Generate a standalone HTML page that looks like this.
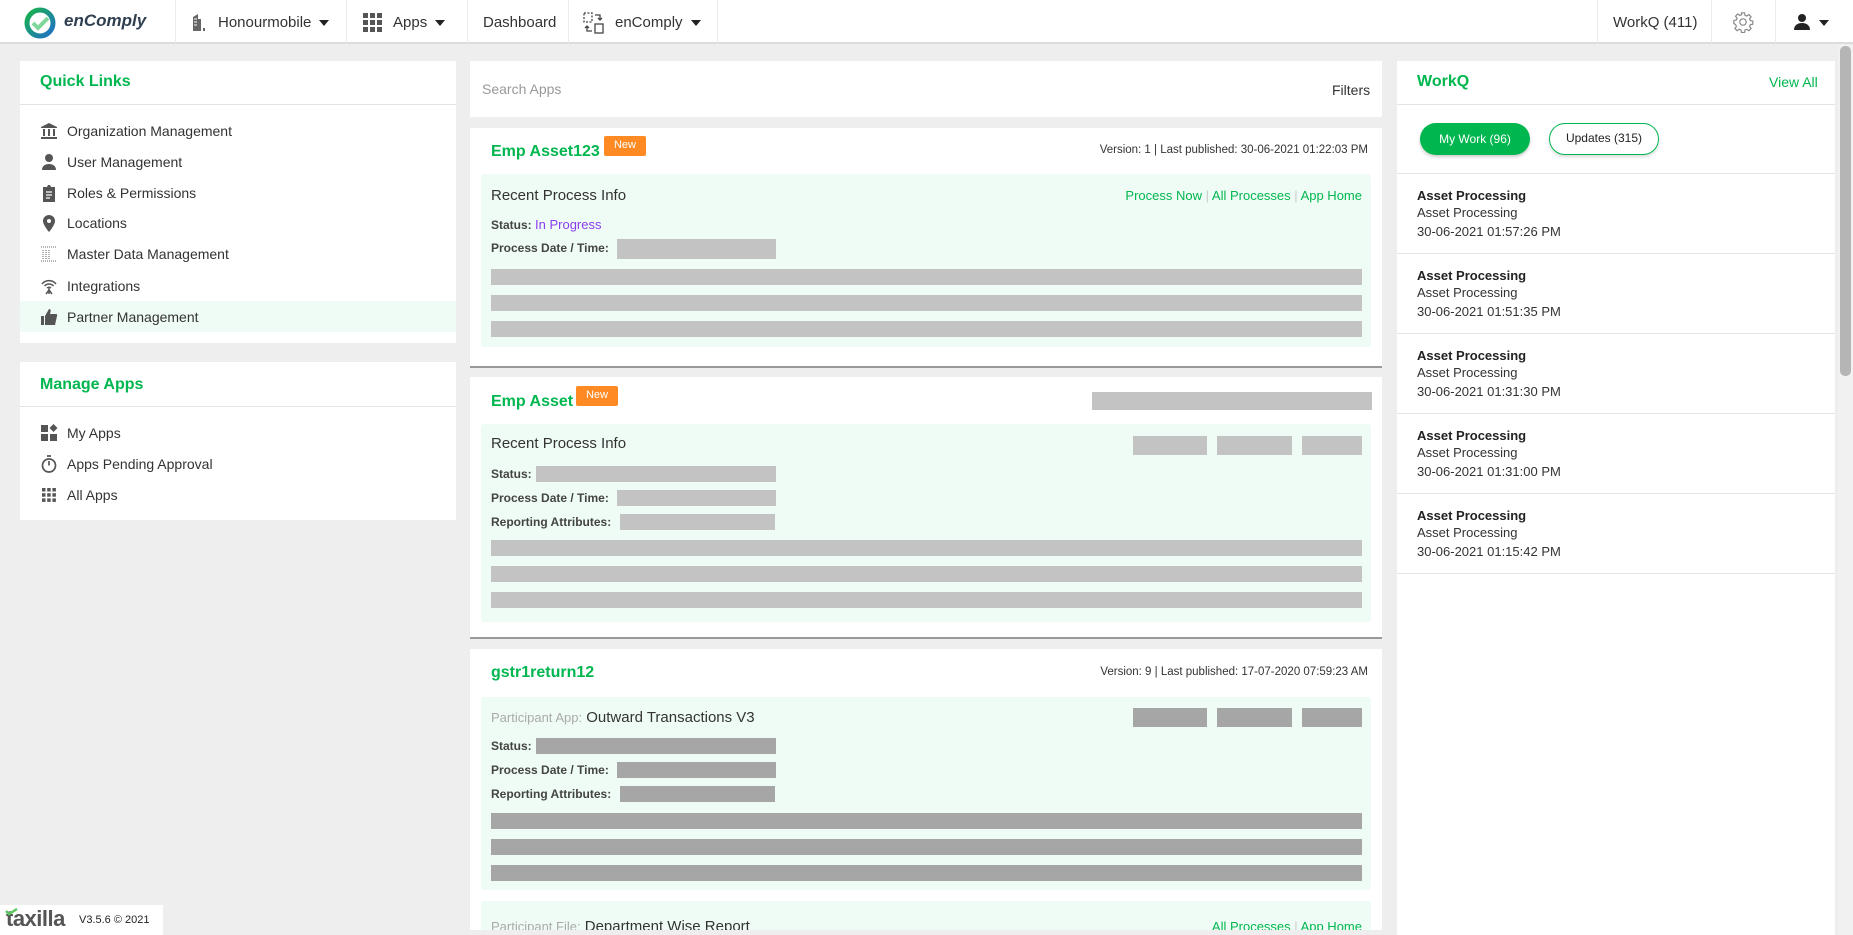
<!DOCTYPE html>
<html><head><meta charset="utf-8">
<style>
*{box-sizing:border-box;margin:0;padding:0}
body{width:1853px;height:935px;overflow:hidden;background:#eeeeee;font-family:"Liberation Sans",sans-serif;color:#333;position:relative}
.a{position:absolute}
.nav{left:0;top:0;width:1853px;height:44px;background:#fff;border-bottom:2px solid #dcdcdc}
.sep{top:0;width:1px;height:43px;background:#ececec}
.nt{font-size:15px;color:#333;top:14px;white-space:nowrap}
.caret{display:inline-block;width:0;height:0;border-left:5px solid transparent;border-right:5px solid transparent;border-top:6px solid #222;vertical-align:middle;margin-left:8px}
.panel{background:#fff}
.hdr{font-size:16px;font-weight:bold;color:#00b74f}
.hr{height:1px;background:#e4e4e4}
.it{font-size:14px;color:#333;white-space:nowrap}
.ic{width:18px;height:18px}
.gbox{background:#effcf5;border-radius:3px}
.g{background:#c3c3c3}
.gd{background:#a6a6a6}
.lbl{font-size:12px;color:#444;font-weight:bold;white-space:nowrap}
.card{background:#fff;border-bottom:2px solid #999}
.ttl{font-size:16px;font-weight:bold;color:#00b74f}
.new{background:#ff8a24;color:#fff;font-size:11px;text-align:center;line-height:19px;border-radius:2px}
.sm{font-size:11.5px;color:#333;white-space:nowrap}
.lk{font-size:13px;color:#00b74f;white-space:nowrap}
.wi b{font-size:13px;color:#222;display:block}
.wi span{font-size:13px;color:#333;display:block;line-height:19px}
</style></head><body>

<div class="a nav"></div>
<svg class="a" style="left:24px;top:7px" width="32" height="32" viewBox="0 0 32 32">
<defs><linearGradient id="lg" x1="0" y1="0" x2="1" y2="1"><stop offset="0" stop-color="#19b34a"/><stop offset="1" stop-color="#1f6fc9"/></linearGradient></defs>
<circle cx="16" cy="16" r="13" fill="none" stroke="url(#lg)" stroke-width="5"/>
<path d="M9 16l5 5 10-10" fill="none" stroke="#7fd79b" stroke-width="4"/></svg>
<div class="a" style="left:64px;top:11px;font-size:17px;font-weight:bold;font-style:italic;color:#2f3f50">enComply</div>
<div class="a sep" style="left:175px"></div>
<svg class="a" style="left:187px;top:12px" width="20" height="20" viewBox="0 0 20 20"><path d="M6 19V5l5-3v17zM11 19V7h3v12zM3 19h15v-3h-2v3" fill="#666"/><path d="M7 7h3M7 10h3M7 13h3" stroke="#fff" stroke-width="1"/></svg>
<div class="a nt" style="left:218px">Honourmobile<span class="caret"></span></div>
<div class="a sep" style="left:346px"></div>
<svg class="a" style="left:363px;top:13px" width="20" height="19" viewBox="0 0 20 19"><g fill="#555"><rect x="0" y="0" width="5" height="5"/><rect x="7" y="0" width="5" height="5"/><rect x="14" y="0" width="5" height="5"/><rect x="0" y="7" width="5" height="5"/><rect x="7" y="7" width="5" height="5"/><rect x="14" y="7" width="5" height="5"/><rect x="0" y="14" width="5" height="5"/><rect x="7" y="14" width="5" height="5"/><rect x="14" y="14" width="5" height="5"/></g></svg>
<div class="a nt" style="left:393px">Apps<span class="caret"></span></div>
<div class="a sep" style="left:467px"></div>
<div class="a nt" style="left:483px">Dashboard</div>
<div class="a sep" style="left:568px"></div>
<svg class="a" style="left:583px;top:12px" width="22" height="22" viewBox="0 0 22 22" fill="none" stroke="#444" stroke-width="1.3"><rect x="1" y="1" width="8" height="9" stroke-dasharray="2 1.5"/><rect x="12" y="12" width="8" height="9"/><path d="M12 3h5v5M15 6l2 2 2-2M9 19H4v-5M2 16l2-2 2 2"/></svg>
<div class="a nt" style="left:615px">enComply<span class="caret"></span></div>
<div class="a sep" style="left:717px"></div>
<div class="a sep" style="left:1597px"></div>
<div class="a nt" style="left:1613px">WorkQ (411)</div>
<div class="a sep" style="left:1711px"></div>
<svg class="a" style="left:1732px;top:11px" width="22" height="22" viewBox="0 0 24 24" fill="none" stroke="#888" stroke-width="1.3"><circle cx="12" cy="12" r="3.5"/><path d="M10.3 2h3.4l.5 2.7 1.9.8 2.3-1.6 2.4 2.4-1.6 2.3.8 1.9 2.7.5v3.4l-2.7.5-.8 1.9 1.6 2.3-2.4 2.4-2.3-1.6-1.9.8-.5 2.7h-3.4l-.5-2.7-1.9-.8-2.3 1.6-2.4-2.4 1.6-2.3-.8-1.9L2 13.7v-3.4l2.7-.5.8-1.9-1.6-2.3 2.4-2.4 2.3 1.6 1.9-.8z"/></svg>
<div class="a sep" style="left:1775px"></div>
<svg class="a" style="left:1793px;top:13px" width="18" height="18" viewBox="0 0 18 18" fill="#222"><circle cx="9" cy="5" r="4"/><path d="M1 17c0-5 4-7 8-7s8 2 8 7z"/></svg>
<div class="a" style="left:1819px;top:20px;width:0;height:0;border-left:5px solid transparent;border-right:5px solid transparent;border-top:6px solid #222"></div>

<div class="a panel" style="left:20px;top:61px;width:436px;height:282px"></div>
<div class="a hdr" style="left:40px;top:73px">Quick Links</div>
<div class="a hr" style="left:20px;top:104px;width:436px"></div>
<div class="a" style="left:20px;top:301px;width:436px;height:31px;background:#effcf5"></div>

<svg class="a ic" style="left:40px;top:122px" viewBox="0 0 18 18" fill="#555"><path d="M9 1l8 4v1H1V5z"/><rect x="3" y="7" width="2" height="7"/><rect x="8" y="7" width="2" height="7"/><rect x="13" y="7" width="2" height="7"/><rect x="1" y="15" width="16" height="2"/></svg>
<div class="a it" style="left:67px;top:123px">Organization Management</div>
<svg class="a ic" style="left:40px;top:153px" viewBox="0 0 18 18" fill="#555"><circle cx="9" cy="5" r="4"/><path d="M2 17c0-4 3-6 7-6s7 2 7 6z"/></svg>
<div class="a it" style="left:67px;top:154px">User Management</div>
<svg class="a ic" style="left:40px;top:184px" viewBox="0 0 18 18" fill="#555"><path d="M3 3h4l1-2h2l1 2h4v15H3z"/><path d="M6 8h6M6 11h6M6 14h4" stroke="#fff" stroke-width="1.3"/></svg>
<div class="a it" style="left:67px;top:185px">Roles &amp; Permissions</div>
<svg class="a ic" style="left:40px;top:214px" viewBox="0 0 18 18" fill="#555"><path d="M9 1a6 6 0 016 6c0 4-6 11-6 11S3 11 3 7a6 6 0 016-6z"/><circle cx="9" cy="7" r="2" fill="#fff"/></svg>
<div class="a it" style="left:67px;top:215px">Locations</div>
<svg class="a ic" style="left:40px;top:245px" viewBox="0 0 18 18" fill="none" stroke="#666" stroke-width="1"><path d="M1 2h16M1 16h16M3 5v9M6 5v9M9 5v9" stroke-dasharray="1 1"/></svg>
<div class="a it" style="left:67px;top:246px">Master Data Management</div>
<svg class="a ic" style="left:40px;top:277px" viewBox="0 0 18 18" fill="none" stroke="#555" stroke-width="1.5"><path d="M2 7a9 9 0 0114 0M4.5 9a6 6 0 019 0M7 11a3 3 0 014 0M9 11v6M6 17l3-4 3 4"/></svg>
<div class="a it" style="left:67px;top:278px">Integrations</div>
<svg class="a ic" style="left:40px;top:308px" viewBox="0 0 18 18" fill="#555"><rect x="1" y="8" width="3" height="9"/><path d="M5 8l4-7c2 0 2 2 1 5h6c1 0 1.5 1 1 2l-2 9H5z"/></svg>
<div class="a it" style="left:67px;top:309px">Partner Management</div>

<div class="a panel" style="left:20px;top:362px;width:436px;height:158px"></div>
<div class="a hdr" style="left:40px;top:376px">Manage Apps</div>
<div class="a hr" style="left:20px;top:406px;width:436px"></div>
<svg class="a ic" style="left:40px;top:424px" viewBox="0 0 18 18" fill="#555"><rect x="1" y="1" width="7" height="7"/><rect x="1" y="10" width="7" height="7"/><rect x="10" y="10" width="7" height="7"/><path d="M13.5 0l4 4-4 4-4-4z"/></svg>
<div class="a it" style="left:67px;top:425px">My Apps</div>
<svg class="a ic" style="left:40px;top:455px" viewBox="0 0 18 18" fill="none" stroke="#555" stroke-width="1.7"><circle cx="9" cy="10.5" r="6.5"/><path d="M7 1h4M9 10.5V6"/></svg>
<div class="a it" style="left:67px;top:456px">Apps Pending Approval</div>
<svg class="a ic" style="left:40px;top:486px" viewBox="0 0 18 18" fill="#555"><rect x="2" y="2" width="3.5" height="3.5"/><rect x="7.2" y="2" width="3.5" height="3.5"/><rect x="12.4" y="2" width="3.5" height="3.5"/><rect x="2" y="7.2" width="3.5" height="3.5"/><rect x="7.2" y="7.2" width="3.5" height="3.5"/><rect x="12.4" y="7.2" width="3.5" height="3.5"/><rect x="2" y="12.4" width="3.5" height="3.5"/><rect x="7.2" y="12.4" width="3.5" height="3.5"/><rect x="12.4" y="12.4" width="3.5" height="3.5"/></svg>
<div class="a it" style="left:67px;top:487px">All Apps</div>

<div class="a panel" style="left:470px;top:61px;width:912px;height:56px"></div>
<div class="a" style="left:482px;top:81px;font-size:14px;color:#999">Search Apps</div>
<div class="a" style="left:1332px;top:82px;font-size:14px;color:#333">Filters</div>

<div class="a" style="left:470px;top:128px;width:912px;height:802px;overflow:hidden">
 <div class="a card" style="left:0;top:0;width:912px;height:240px"></div>
 <div class="a ttl" style="left:21px;top:15px">Emp Asset123</div>
 <div class="a new" style="left:134px;top:8px;width:42px;height:20px">New</div>
 <div class="a sm" style="right:14px;top:16px">Version: 1 | Last published: 30-06-2021 01:22:03 PM</div>
 <div class="a gbox" style="left:11px;top:46px;width:890px;height:173px"></div>
 <div class="a" style="left:21px;top:59px;font-size:15px;color:#333">Recent Process Info</div>
 <div class="a lk" style="right:20px;top:60px">Process Now <span style="color:#ccc">|</span> All Processes <span style="color:#ccc">|</span> App Home</div>
 <div class="a lbl" style="left:21px;top:89px">Status: <span style="font-weight:normal;color:#8a3cf0;font-size:13px">In Progress</span></div>
 <div class="a lbl" style="left:21px;top:113px">Process Date / Time:</div>
 <div class="a g" style="left:147px;top:111px;width:159px;height:20px"></div>
 <div class="a g" style="left:21px;top:141px;width:871px;height:16px"></div>
 <div class="a g" style="left:21px;top:167px;width:871px;height:16px"></div>
 <div class="a g" style="left:21px;top:193px;width:871px;height:16px"></div>

 <div class="a card" style="left:0;top:249px;width:912px;height:262px"></div>
 <div class="a ttl" style="left:21px;top:265px">Emp Asset</div>
 <div class="a new" style="left:106px;top:258px;width:42px;height:20px">New</div>
 <div class="a g" style="left:622px;top:264px;width:280px;height:18px"></div>
 <div class="a gbox" style="left:11px;top:296px;width:890px;height:198px"></div>
 <div class="a" style="left:21px;top:307px;font-size:15px;color:#333">Recent Process Info</div>
 <div class="a g" style="left:663px;top:308px;width:74px;height:19px"></div>
 <div class="a g" style="left:747px;top:308px;width:75px;height:19px"></div>
 <div class="a g" style="left:832px;top:308px;width:60px;height:19px"></div>
 <div class="a lbl" style="left:21px;top:339px">Status:</div><div class="a g" style="left:66px;top:338px;width:240px;height:16px"></div>
 <div class="a lbl" style="left:21px;top:363px">Process Date / Time:</div><div class="a g" style="left:147px;top:362px;width:159px;height:16px"></div>
 <div class="a lbl" style="left:21px;top:387px">Reporting Attributes:</div><div class="a g" style="left:150px;top:386px;width:155px;height:16px"></div>
 <div class="a g" style="left:21px;top:412px;width:871px;height:16px"></div>
 <div class="a g" style="left:21px;top:438px;width:871px;height:16px"></div>
 <div class="a g" style="left:21px;top:464px;width:871px;height:16px"></div>

 <div class="a" style="left:0;top:521px;width:912px;height:300px;background:#fff"></div>
 <div class="a ttl" style="left:21px;top:536px">gstr1return12</div>
 <div class="a sm" style="right:14px;top:538px">Version: 9 | Last published: 17-07-2020 07:59:23 AM</div>
 <div class="a gbox" style="left:11px;top:569px;width:890px;height:193px"></div>
 <div class="a" style="left:21px;top:581px;font-size:15px;color:#333"><span style="color:#aaa;font-size:13px">Participant App:</span> Outward Transactions V3</div>
 <div class="a gd" style="left:663px;top:580px;width:74px;height:19px"></div>
 <div class="a gd" style="left:747px;top:580px;width:75px;height:19px"></div>
 <div class="a gd" style="left:832px;top:580px;width:60px;height:19px"></div>
 <div class="a lbl" style="left:21px;top:611px">Status:</div><div class="a gd" style="left:66px;top:610px;width:240px;height:16px"></div>
 <div class="a lbl" style="left:21px;top:635px">Process Date / Time:</div><div class="a gd" style="left:147px;top:634px;width:159px;height:16px"></div>
 <div class="a lbl" style="left:21px;top:659px">Reporting Attributes:</div><div class="a gd" style="left:150px;top:658px;width:155px;height:16px"></div>
 <div class="a gd" style="left:21px;top:685px;width:871px;height:16px"></div>
 <div class="a gd" style="left:21px;top:711px;width:871px;height:16px"></div>
 <div class="a gd" style="left:21px;top:737px;width:871px;height:16px"></div>
 <div class="a gbox" style="left:11px;top:773px;width:890px;height:60px"></div>
 <div class="a" style="left:21px;top:790px;font-size:15px;color:#333"><span style="color:#aaa;font-size:13px">Participant File:</span> Department Wise Report</div>
 <div class="a lk" style="right:20px;top:791px">All Processes <span style="color:#ccc">|</span> App Home</div>
</div>

<div class="a panel" style="left:1397px;top:61px;width:438px;height:874px"></div>
<div class="a hdr" style="left:1417px;top:73px">WorkQ</div>
<div class="a" style="left:1769px;top:74px;font-size:14px;color:#00b74f">View All</div>
<div class="a hr" style="left:1397px;top:104px;width:438px"></div>
<div class="a" style="left:1420px;top:123px;width:110px;height:32px;border-radius:16px;background:#00b74f;color:#fff;font-size:12px;text-align:center;line-height:32px;box-shadow:0 2px 3px rgba(0,0,0,.2)">My Work (96)</div>
<div class="a" style="left:1549px;top:123px;width:110px;height:32px;border-radius:16px;border:1.5px solid #00b74f;color:#222;font-size:12px;text-align:center;line-height:29px;box-shadow:0 2px 3px rgba(0,0,0,.15)">Updates (315)</div>
<div class="a hr" style="left:1397px;top:173px;width:438px"></div>

<div class="a wi" style="left:1417px;top:188px"><b>Asset Processing</b><span>Asset Processing</span><span>30-06-2021 01:57:26 PM</span></div>
<div class="a hr" style="left:1397px;top:253px;width:438px"></div>
<div class="a wi" style="left:1417px;top:268px"><b>Asset Processing</b><span>Asset Processing</span><span>30-06-2021 01:51:35 PM</span></div>
<div class="a hr" style="left:1397px;top:333px;width:438px"></div>
<div class="a wi" style="left:1417px;top:348px"><b>Asset Processing</b><span>Asset Processing</span><span>30-06-2021 01:31:30 PM</span></div>
<div class="a hr" style="left:1397px;top:413px;width:438px"></div>
<div class="a wi" style="left:1417px;top:428px"><b>Asset Processing</b><span>Asset Processing</span><span>30-06-2021 01:31:00 PM</span></div>
<div class="a hr" style="left:1397px;top:493px;width:438px"></div>
<div class="a wi" style="left:1417px;top:508px"><b>Asset Processing</b><span>Asset Processing</span><span>30-06-2021 01:15:42 PM</span></div>
<div class="a hr" style="left:1397px;top:573px;width:438px"></div>

<div class="a" style="left:1838px;top:45px;width:15px;height:890px;background:#f1f1f1"></div>
<div class="a" style="left:1840px;top:46px;width:11px;height:330px;background:#b5b5b5;border-radius:5px"></div>

<div class="a" style="left:0;top:905px;width:163px;height:30px;background:#fff"></div>
<div class="a" style="left:6px;top:906px;font-size:22px;font-weight:bold;color:#555;letter-spacing:-0.5px">taxilla</div>
<svg class="a" style="left:5px;top:908px" width="14" height="8" viewBox="0 0 14 8"><path d="M1 3l3 3 8-5" stroke="#5ec95e" stroke-width="2.5" fill="none"/></svg>
<div class="a" style="left:79px;top:914px;font-size:11px;color:#222">V3.5.6 © 2021</div>
</body></html>
